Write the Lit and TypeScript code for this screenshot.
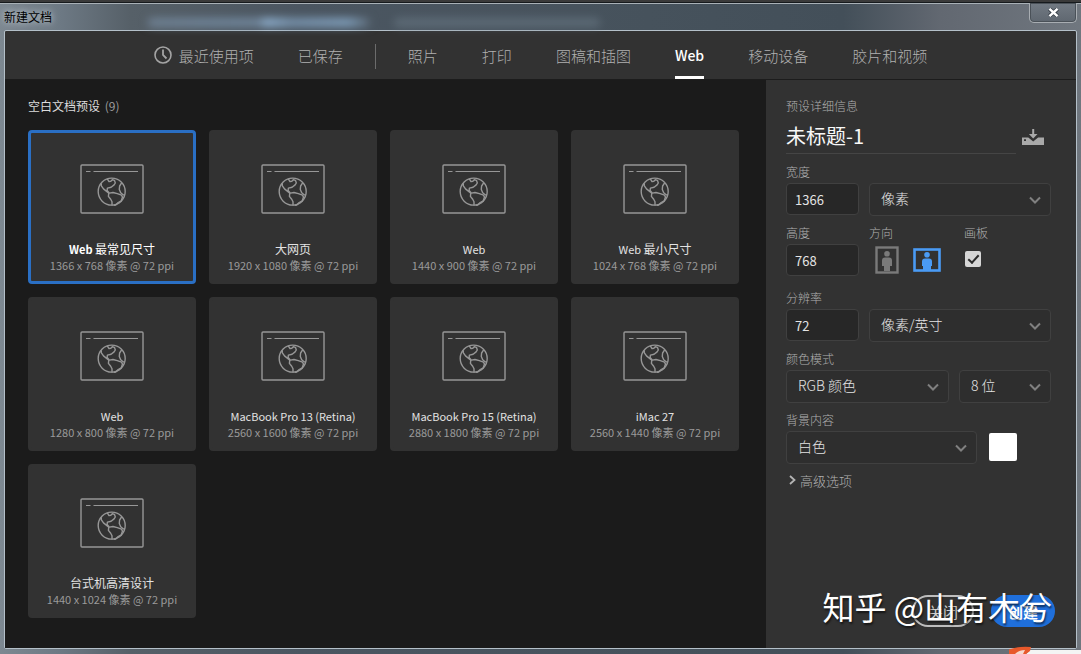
import { LitElement, html, css, svg } from "lit";
import { customElement, property, state } from "lit/decorators.js";
import { classMap } from "lit/directives/class-map.js";

const chevron = svg`<path d="M1 1.5 L6 6.5 L11 1.5" fill="none" stroke="currentColor" stroke-width="2"/>`;

@customElement("preset-card")
class PresetCard extends LitElement {
  @property() name = "";
  @property() size = "";
  @property({ type: Boolean, reflect: true }) selected = false;

  static styles = css`
    :host { display: block; }
    .card {
      box-sizing: border-box; width: 100%; height: 154px; padding: 31px 0 0;
      display: flex; flex-direction: column; align-items: center;
      border: 3px solid #323232; border-radius: 4px; background: #323232;
      font-family: inherit; color: #e2e2e2; cursor: pointer;
    }
    .selected { border-color: #2a6fc4; color: #fff; }
    .icon { display: block; width: 64px; height: 50px; color: #979797; margin-bottom: 27px; }
    .name { font-size: 12px; line-height: 16px; font-weight: 400; }
    .latin { font-size: 11px; }
    .selected .latin { font-weight: 700; }
    .size { font-size: 11px; line-height: 16px; color: #9a9a9a; }
  `;

  render() {
    const [, latin, rest] = this.name.match(/^([\x20-\x7e]*)(.*)$/) ?? ["", "", this.name];
    return html`
      <button class=${classMap({ card: true, selected: this.selected })} aria-pressed=${this.selected}>
        <svg class="icon" viewBox="0 0 64 50" fill="none" stroke="currentColor" stroke-width="1.4" stroke-linejoin="round" aria-hidden="true">
          <rect x="1" y="1" width="62" height="48" rx="1"/>
          <path d="M6 7.5h4.500M13.500 7.500H58" stroke-width="1.1"/>
          <circle cx="31.700" cy="27.600" r="13.500"/>
          <path d="M27.300 14.900L29 17.600l1.800-.3 1.500-1.500 2.200.6.8 2.600-1.200 1.900-3 2.300-3.700.9-.3 2.300 2.300 2.700 3.600-.6 4.300 1.200 4.200 1.500 1 1.900-1.300 3.800-3 1.600-2.500 2.600-1.800.2M21.400 19.400l-.2 2.200 2.300 3.300 5.300 4.200-.4 3.300 2.300 2.900 1.300 2.500v3.600"/>
          <path d="M41.800 18.700l-2.200 3.300-.3 3.400 1.400 3.300 2.400 2.100 1.500.2"/>
        </svg>
        <span class="name">${latin ? html`<span class="latin">${latin}</span>` : ""}${rest}</span>
        <span class="size">${this.size}</span>
      </button>`;
  }
}

@customElement("app-root")
class AppRoot extends LitElement {
  @state() private presets = [
    ["Web 最常见尺寸", "1366 x 768 像素 @ 72 ppi"],
    ["大网页", "1920 x 1080 像素 @ 72 ppi"],
    ["Web", "1440 x 900 像素 @ 72 ppi"],
    ["Web 最小尺寸", "1024 x 768 像素 @ 72 ppi"],
    ["Web", "1280 x 800 像素 @ 72 ppi"],
    ["MacBook Pro 13 (Retina)", "2560 x 1600 像素 @ 72 ppi"],
    ["MacBook Pro 15 (Retina)", "2880 x 1800 像素 @ 72 ppi"],
    ["iMac 27", "2560 x 1440 像素 @ 72 ppi"],
    ["台式机高清设计", "1440 x 1024 像素 @ 72 ppi"],
  ];
  @state() private selected = 0;
  @state() private tab = "Web";

  static styles = css`
    :host {
      display: block;
      font-family: "Noto Sans CJK SC", "Noto Sans", sans-serif;
      font-weight: 400;
    }
    * { box-sizing: border-box; }
    button, input, select { font-family: inherit; margin: 0; }
    .window {
      position: relative; min-height: 100vh; overflow: hidden;
      display: flex; flex-direction: column; padding: 3px 4px 5px;
      background: linear-gradient(#3a3a3a 0 2px, #161a1d 2px 3px, #a9b1b7 3px 4px, transparent 4px),
        linear-gradient(90deg, #7d8891 0, #6d7984 60px, #566068 130px, #4b5661 300px, #46525c 60%, #434f59 78%, #626871 87%, #70777f 100%);
    }
    .titlebar { display: flex; justify-content: space-between; height: 27px; position: relative; }
    .title { margin: 0; font-size: 12px; line-height: 27px; font-weight: 400; color: #000; text-shadow: 0 0 6px #c3ccd3, 0 0 8px #a5b0ba; }
    .haze { position: absolute; top: 15px; height: 9px; border-radius: 4px; filter: blur(4px); }
    .haze-a { left: 144px; width: 222px; background: linear-gradient(90deg, #6f8193, #71879d 50%, #91b2d2 53%, #7792ac 65%, #81a0bd 90%, #5a6874); }
    .haze-b { left: 390px; width: 206px; background: #667581; opacity: .7; }
    .close {
      width: 48px; height: 20px; padding: 0;
      display: flex; align-items: center; justify-content: center;
      border: 1px solid #a8adb2; border-top: 0; border-radius: 0 0 5px 5px;
      background: linear-gradient(#727a83, #5f6770); box-shadow: inset 0 0 0 1px #4a5158;
    }
    .dialog {
      flex: 1; display: flex; flex-direction: column;
      border: 1px solid #b4c0c9; border-radius: 2px; background: #323232;
    }
    .tabs {
      height: 49px; display: flex; justify-content: center; gap: 44px;
      border-bottom: 1px solid #1c1c1c;
    }
    .tab {
      display: flex; align-items: center; gap: 7px; padding: 3px 0 0; height: 48px;
      border: 0; background: none; font-size: 15px; font-weight: 300; color: #b0b0b0; white-space: nowrap;
      border-bottom: 3px solid transparent;
    }
    .active { color: #fff; font-weight: 500; font-size: 14px; border-bottom-color: #fff; }
    .rule { width: 1px; height: 25px; margin: 13px -12px 0; background: #6c6c6c; }
    .body { flex: 1; display: flex; }
    .presets { flex: 1; padding: 16px 14px 20px 23px; background: #1b1b1b; }
    .heading { margin: 0 0 14px; font-size: 12px; line-height: 20px; font-weight: 400; color: #dcdcdc; }
    .count { color: #9c9c9c; margin-left: 2px; }
    .grid { display: grid; grid-template-columns: repeat(auto-fill, 168px); gap: 13px; }
    .details {
      width: 310px; padding: 16px 25px 21px 20px; display: flex; flex-direction: column;
      background: #323232; color: #b0b0b0; font-size: 12px; font-weight: 300;
    }
    .subhead { margin: 0 0 4px; font-size: 12px; line-height: 20px; font-weight: 300; }
    .namerow { display: flex; align-items: center; gap: 6px; margin-bottom: 7px; }
    .docname {
      flex: 1; min-width: 0; height: 34px; padding: 0 0 2px; border: 0; border-bottom: 1px solid #454545;
      background: none; color: #f8f8f8; font-size: 20px; font-weight: 400;
    }
    .save { padding: 0; margin-right: 7px; border: 0; background: none; display: flex; color: #a9a9a9; }
    .row { display: flex; gap: 10px; margin-bottom: 6px; }
    .spaced { margin-bottom: 11px; }
    .field { display: flex; flex-direction: column; min-width: 0; }
    .grow { flex: 1; }
    .label { display: block; height: 22px; line-height: 22px; white-space: nowrap; }
    .num {
      width: 73px; height: 32px; padding: 0 8px; border: 1px solid #404040; border-radius: 4px;
      background: #272727; color: #e4e4e4; font-size: 13px;
    }
    .pick { display: grid; align-items: center; }
    .pick > * { grid-area: 1 / 1; }
    .select {
      appearance: none; width: 100%; height: 33px; padding: 0 28px 3px 11px; border: 1px solid #404040;
      border-radius: 4px; background: #2e2e2e; color: #e4e4e4; font-size: 14px; font-weight: 300;
    }
    .arrow { justify-self: end; margin-right: 10px; color: #808080; pointer-events: none; }
    .bits { width: 92px; }
    .background { width: 191px; }
    .orient { display: flex; align-items: center; gap: 14px; height: 32px; padding-left: 6px; width: 85px; }
    .icon-button { padding: 0; border: 0; background: none; display: flex; color: #7a7a7a; }
    .on { color: #4a9bf5; }
    .check {
      appearance: none; width: 16px; height: 16px; margin: 7px 0 0 1px; border-radius: 2px; background: #d6d6d6;
      display: grid; place-items: center;
    }
    .check:checked::after {
      content: ""; width: 9px; height: 4px; border: solid #2b2b2b; border-width: 0 0 2px 2px;
      transform: rotate(-48deg); margin-bottom: 3px;
    }
    .swatch { width: 28px; height: 28px; margin: 24px 0 0 2px; padding: 0; border: 0; border-radius: 2px; background: #fff; }
    .advanced {
      align-self: flex-start; display: flex; align-items: center; gap: 4px; padding: 0 0 0 3px; height: 20px;
      border: 0; background: none; color: #b0b0b0; font-size: 13px; font-weight: 300;
    }
    .actions { margin: auto -4px 0 0; display: flex; justify-content: flex-end; gap: 17px; }
    .action {
      width: 62px; height: 32px; padding: 0; border-radius: 16px; border: 2px solid #bdbdbd;
      background: none; color: #cfcfcf; font-size: 15px;
    }
    .primary { width: 64px; border-color: #1f6fdb; background: #1f6fdb; color: #fff; font-weight: 700; }
    .watermark {
      position: absolute; right: 29px; bottom: 24px; font-size: 32px; line-height: 48px; font-weight: 400;
      color: #fff; text-shadow: 1px 2px 2px #0009; white-space: nowrap; pointer-events: none;
    }
    .corner { position: absolute; right: 0; bottom: 0; width: 75px; height: 8px; }
  `;

  private renderTab(label: string, icon: unknown = "") {
    return html`<button
      class=${classMap({ tab: true, active: this.tab === label })}
      role="tab"
      aria-selected=${this.tab === label}
      @click=${() => (this.tab = label)}
    >${icon}<span>${label}</span></button>`;
  }

  private renderSelect(id: string, value: string, label = "") {
    return html`<div class="pick">
      <select class="select" id=${id} aria-label=${label || value}><option>${value}</option></select>
      <svg class="arrow" width="12" height="8" viewBox="0 0 12 8" aria-hidden="true">${chevron}</svg>
    </div>`;
  }

  render() {
    const clock = html`<svg width="18" height="18" viewBox="0 0 18 18" fill="none" stroke="#a4a4a4" aria-hidden="true">
      <circle cx="9" cy="9" r="8" stroke-width="1.600"/><path d="M9 3.500V9l3.500 3.500" stroke-width="1.800"/></svg>`;
    return html`
      <div class="window">
        <div class="titlebar">
          <div class="haze haze-a"></div>
          <div class="haze haze-b"></div>
          <h1 class="title">新建文档</h1>
          <button class="close" aria-label="关闭窗口">
            <svg width="11" height="9" viewBox="0 0 11 9"><path d="M1.500 1l8 7M9.500 1l-8 7" stroke="#333b44" stroke-width="4"/><path d="M1.500 .8l8 7.400M9.500 .8l-8 7.400" stroke="#fff" stroke-width="2.400"/></svg>
          </button>
        </div>
        <main class="dialog">
          <nav class="tabs" role="tablist">
            ${this.renderTab("最近使用项", clock)} ${this.renderTab("已保存")}
            <span class="rule"></span>
            ${["照片", "打印", "图稿和插图", "Web", "移动设备", "胶片和视频"].map((t) => this.renderTab(t))}
          </nav>
          <div class="body">
            <section class="presets">
              <h2 class="heading">空白文档预设 <span class="count">(9)</span></h2>
              <div class="grid">
                ${this.presets.map(
                  ([name, size], i) => html`<preset-card
                    .name=${name} .size=${size} .selected=${i === this.selected}
                    @click=${() => (this.selected = i)}
                  ></preset-card>`
                )}
              </div>
            </section>
            <aside class="details">
              <h2 class="subhead">预设详细信息</h2>
              <div class="namerow">
                <input class="docname" aria-label="名称" value="未标题-1" />
                <button class="save" aria-label="存储预设">
                  <svg width="22" height="16" viewBox="0 0 22 16" fill="currentColor">
                    <path d="M10.200 0h2v5h3.300l-4.300 4.500L6.900 5h3.300z"/>
                    <path fill-rule="evenodd" d="M0 8.500h6.300l4.900 4 4.900-4H22V16H0zM2 10.200v1.800h2v-1.800z"/>
                  </svg>
                </button>
              </div>
              <div class="row">
                <div class="field"><label class="label" for="width">宽度</label><input class="num" id="width" value="1366" /></div>
                <div class="field grow"><span class="label"></span>${this.renderSelect("unit", "像素", "单位")}</div>
              </div>
              <div class="row spaced">
                <div class="field"><label class="label" for="height">高度</label><input class="num" id="height" value="768" /></div>
                <div class="field">
                  <span class="label">方向</span>
                  <div class="orient">
                    <button class="icon-button" aria-label="纵向">
                      <svg width="24" height="28" viewBox="0 0 24 28"><rect x="1.500" y="1.500" width="21" height="25" fill="none" stroke="currentColor" stroke-width="2.400"/><circle cx="12" cy="7.800" r="2.800" fill="currentColor"/><path d="M7 14.500q0-3 3-3h4q3 0 3 3V20h-2v5H9v-5H7z" fill="currentColor"/></svg>
                    </button>
                    <button class="icon-button on" aria-label="横向">
                      <svg width="28" height="24" viewBox="0 0 28 24"><rect x="1.500" y="1.500" width="25" height="21" fill="none" stroke="currentColor" stroke-width="2.600"/><circle cx="14" cy="6.800" r="2.800" fill="currentColor"/><path d="M9 13.500q0-3 3-3h4q3 0 3 3V18h-1v4h-8v-4H9z" fill="currentColor"/></svg>
                    </button>
                  </div>
                </div>
                <div class="field"><label class="label" for="artboard">画板</label><input class="check" id="artboard" type="checkbox" checked /></div>
              </div>
              <div class="row">
                <div class="field"><label class="label" for="res">分辨率</label><input class="num" id="res" value="72" /></div>
                <div class="field grow"><span class="label"></span>${this.renderSelect("res-unit", "像素/英寸", "分辨率单位")}</div>
              </div>
              <div class="row">
                <div class="field grow"><label class="label" for="mode">颜色模式</label>${this.renderSelect("mode", "RGB 颜色", "颜色模式")}</div>
                <div class="field bits"><span class="label"></span>${this.renderSelect("bits", "8 位", "位深度")}</div>
              </div>
              <div class="row">
                <div class="field background"><label class="label" for="bg">背景内容</label>${this.renderSelect("bg", "白色", "背景内容")}</div>
                <button class="swatch" aria-label="背景颜色"></button>
              </div>
              <button class="advanced">
                <svg width="7" height="10" viewBox="0 0 7 10"><path d="M1 1l4.500 4L1 9" fill="none" stroke="#b4b4b4" stroke-width="1.800"/></svg>高级选项
              </button>
              <div class="actions">
                <button class="action">关闭</button>
                <button class="action primary">创建</button>
              </div>
            </aside>
          </div>
        </main>
        <div class="watermark">知乎 @山有木兮</div>
        <svg class="corner" viewBox="0 0 75 8" aria-hidden="true">
          <path d="M24 4h51v4H20z" fill="#f4f4f4"/>
          <path d="M3 8V3.500Q12 0 25 1l-1 4-4 3z" fill="#e8592b"/><path d="M9 8q4-4 10-4l-2 4z" fill="#f5d9cd"/>
        </svg>
      </div>`;
  }
}
